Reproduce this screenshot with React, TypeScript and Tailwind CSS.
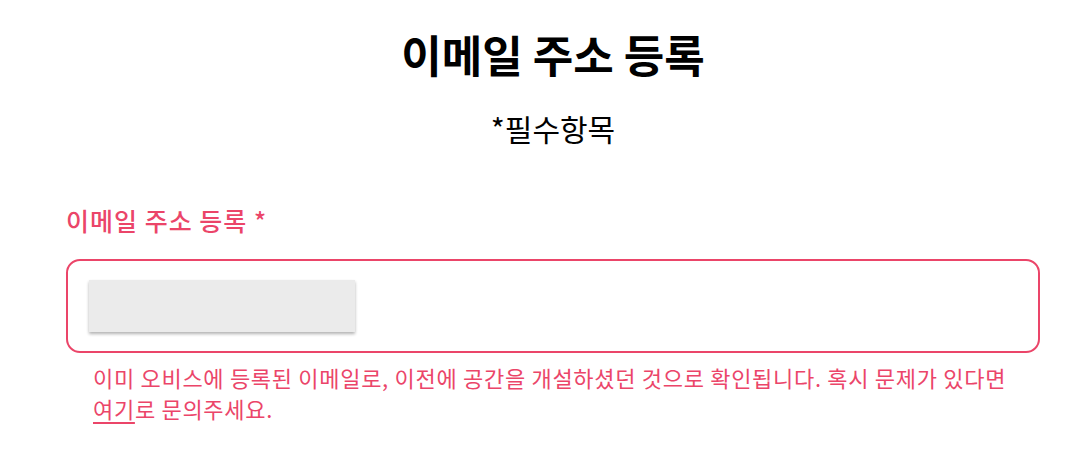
export default function App() {
  return (
    <main
      className="min-h-[458px] w-full bg-white pl-[66px] pr-[52px] pt-[26px]"
      style={{ fontFamily: '"Noto Sans CJK KR", "Noto Sans", sans-serif' }}
    >
      <div className="flex flex-col items-center">
        <h1 className="text-[44px] font-bold leading-[56px] text-black">이메일 주소 등록</h1>
        <p className="mt-[28px] text-[30px] leading-[36px] text-black">*필수항목</p>
      </div>

      <div className="mt-[58px] flex flex-col">
        <label className="text-[25px] font-medium leading-[32px] tracking-[1px] text-[#eb4569]">
          이메일 주소 등록 *
        </label>

        <div className="mt-[23px] flex h-[94px] items-center rounded-[14px] border-2 border-[#eb4569] pl-[21px]">
          <div className="h-[52px] w-[266px] bg-[#ebebeb] shadow-[0_2px_3px_rgba(0,0,0,0.3)]" />
        </div>

        <div className="mt-[8px] flex flex-col pl-[27px] text-[22px] leading-[32px] tracking-[0.7px] text-[#eb4569]">
          <p>이미 오비스에 등록된 이메일로, 이전에 공간을 개설하셨던 것으로 확인됩니다. 혹시 문제가 있다면</p>
          <p className="-mt-px">
            <a href="#" className="underline underline-offset-4">
              여기
            </a>
            로 문의주세요.
          </p>
        </div>
      </div>
    </main>
  );
}
